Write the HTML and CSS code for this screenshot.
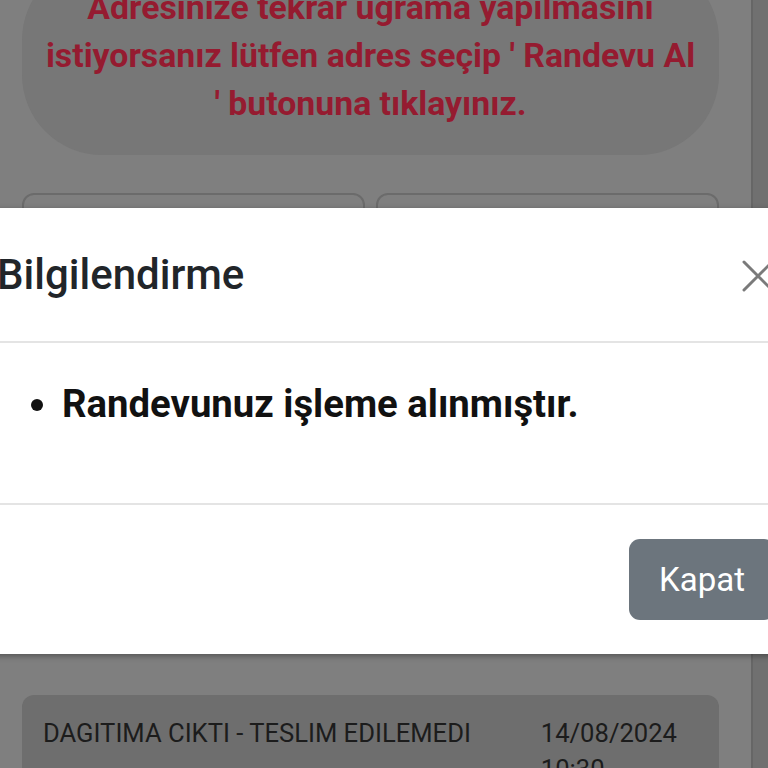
FILE: index.html
```html
<!DOCTYPE html>
<html lang="tr">
<head>
<meta charset="utf-8">
<title>Bilgilendirme</title>
<link rel="stylesheet" href="styles.css">
</head>
<body>
<div class="page">
  <main class="content">
    <div class="notice">
      Adresinize tekrar uğrama yapılmasını istiyorsanız lütfen adres seçip ' Randevu Al ' butonuna tıklayınız.
    </div>
    <div class="address-grid">
      <div class="address-card"></div>
      <div class="address-card"></div>
    </div>
    <div class="history-card">
      <div class="history-status">DAGITIMA CIKTI - TESLIM EDILEMEDI</div>
      <div class="history-date">14/08/2024<br>10:30</div>
    </div>
  </main>
  <div class="scrollbar"></div>
</div>

<div class="modal" role="dialog">
  <div class="modal-header">
    <h5 class="modal-title">Bilgilendirme</h5>
    <button class="close-btn" aria-label="Kapat">
      <svg viewBox="0 0 34 34" width="34" height="34"><path d="M3 3 L31 31 M31 3 L3 31" stroke="#7a7a7a" stroke-width="3" stroke-linecap="round" fill="none"/></svg>
    </button>
  </div>
  <div class="modal-body">
    <ul class="msg-list">
      <li>Randevunuz işleme alınmıştır.</li>
    </ul>
  </div>
  <div class="modal-footer">
    <button class="btn-secondary">Kapat</button>
  </div>
</div>
</body>
</html>
```
FILE: styles.css
```css
html, body {
  margin: 0;
  padding: 0;
}
body {
  width: 768px;
  height: 768px;
  overflow: hidden;
  background: #7f7f7f;
  font-family: Roboto, "Liberation Sans", sans-serif;
  position: relative;
}
.page {
  display: flex;
  height: 768px;
}
.content {
  flex: 1;
  padding: 0 32px 0 22px;
  margin-top: -40px;
}
.scrollbar {
  width: 15px;
  background: #707070;
  border-left: 2px solid #666;
}
.notice {
  background: #777777;
  border-radius: 80px;
  padding: 24px 20px 27px;
  color: #951b30;
  font-weight: 700;
  font-size: 33.8px;
  line-height: 48px;
  text-align: center;
}
.address-grid {
  display: grid;
  grid-template-columns: 1fr 1fr;
  gap: 11px;
  margin-top: 38px;
}
.address-card {
  height: 440px;
  border: 2px solid #6b6b6b;
  border-radius: 12px;
}
.history-card {
  margin-top: 58px;
  background: #6e6e6e;
  border-radius: 12px;
  display: flex;
  justify-content: space-between;
  padding: 20px 42px 0 21px;
  color: #1c1c1c;
  font-size: 25.6px;
  line-height: 36px;
}
.modal {
  position: absolute;
  top: 208px;
  left: -16px;
  width: 800px;
  background: #fff;
  box-shadow: 0 2px 6px rgba(0,0,0,0.35);
}
.modal-header {
  height: 133px;
  display: flex;
  align-items: center;
  justify-content: space-between;
  padding: 0 9px 0 13px;
  border-bottom: 2px solid #e4e4e4;
}
.modal-title {
  margin: 0;
  font-size: 42px;
  font-weight: 500;
  color: #212529;
}
.close-btn {
  background: none;
  border: 0;
  padding: 0;
  margin-top: 2px;
  display: flex;
}
.modal-body {
  border-bottom: 2px solid #e4e4e4;
  box-sizing: border-box;
  height: 162px;
  padding-top: 38px;
}
.msg-list {
  margin: 0;
  padding-left: 78px;
  font-size: 38.3px;
  font-weight: 700;
  color: #111;
}
.modal-footer {
  height: 149px;
  display: flex;
  align-items: center;
  justify-content: flex-end;
  padding-right: 9px;
}
.btn-secondary {
  background: #6c757d;
  color: #fff;
  border: 0;
  border-radius: 11px;
  width: 146px;
  height: 81px;
  font-family: Roboto, "Liberation Sans", sans-serif;
  font-size: 33px;
}
```
